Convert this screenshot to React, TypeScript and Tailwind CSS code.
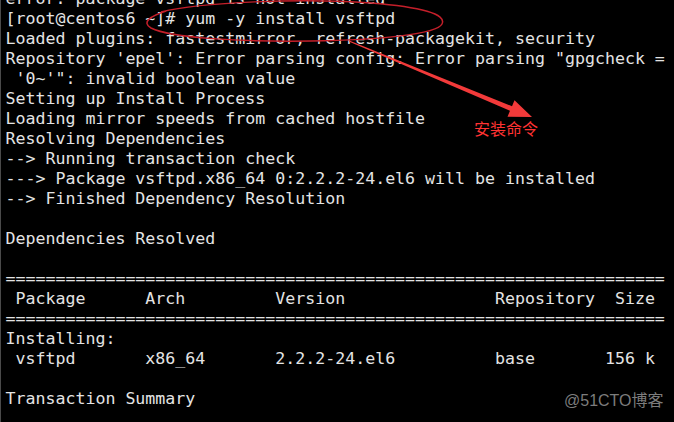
import React from "react";

const eq = "=".repeat(66);

const header =
  " Package".padEnd(14) + "Arch".padEnd(13) + "Version".padEnd(22) + "Repository  Size";
const row =
  " vsftpd".padEnd(14) +
  "x86_64".padEnd(13) +
  "2.2.2-24.el6".padEnd(22) +
  "base".padEnd(11) +
  "156 k";

const lines: string[] = [
  "error: package vsftpd is not installed",
  "[root@centos6 ~]# yum -y install vsftpd",
  "Loaded plugins: fastestmirror, refresh-packagekit, security",
  "Repository 'epel': Error parsing config: Error parsing \"gpgcheck =",
  " '0~'\": invalid boolean value",
  "Setting up Install Process",
  "Loading mirror speeds from cached hostfile",
  "Resolving Dependencies",
  "--> Running transaction check",
  "---> Package vsftpd.x86_64 0:2.2.2-24.el6 will be installed",
  "--> Finished Dependency Resolution",
  "",
  "Dependencies Resolved",
  "",
  eq,
  header,
  eq,
  "Installing:",
  row,
  "",
  "Transaction Summary",
  "",
];

export default function App() {
  return (
    <div className="relative w-[674px] h-[422px] overflow-hidden bg-black border-l border-[#4a4a4a]">
      <div
        className="flex flex-col mt-[-11.25px] pl-[4.5px] text-[16.6px] leading-[20px] text-[#e4e4e4]"
        style={{ fontFamily: '"DejaVu Sans Mono", "Liberation Mono", monospace' }}
      >
        {lines.map((l, i) => (
          <div key={i} className="h-[20px] whitespace-pre">
            {l}
          </div>
        ))}
      </div>

      <svg
        className="absolute left-0 top-0 pointer-events-none"
        width="674"
        height="422"
        viewBox="0 0 674 422"
      >
        <path
          d="M 160 12 C 200 2, 300 -2, 370 3 C 420 7, 446 14, 441 24 C 436 34, 380 40, 310 41 C 240 42, 170 38, 150 28 C 140 22, 150 16, 165 11"
          fill="none"
          stroke="#c41f2a"
          strokeWidth="1.5"
        />
        <polygon
          points="348.2,40.4 511,106.2 513.5,100.2 531,117 506.5,116.8 509,110.8 347.8,41.6"
          fill="#f23a3a"
        />
      </svg>

      <div
        className="absolute left-[473px] top-[119px] text-[16px] leading-[18px] text-[#ff3333]"
        style={{ fontFamily: '"Noto Sans CJK SC", sans-serif' }}
      >
        安装命令
      </div>

      <div
        className="absolute left-[563px] top-[391px] text-[16px] leading-[20px] text-[#7c7c7c]"
        style={{ fontFamily: '"Liberation Sans", "Noto Sans CJK SC", sans-serif' }}
      >
        @51CTO博客
      </div>
    </div>
  );
}
